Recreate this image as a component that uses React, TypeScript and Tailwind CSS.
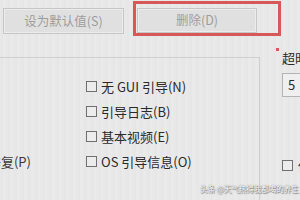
const font = { fontFamily: '"Noto Sans CJK SC", "Noto Sans", sans-serif' }

const options = ['无 GUI 引导(N)', '引导日志(B)', '基本视频(E)', 'OS 引导信息(O)']

function Box() {
  return <span className="block h-[11px] w-[11px] shrink-0 border border-[#707070] bg-[#ececec]" />
}

export default function App() {
  return (
    <div
      style={font}
      className="relative h-[200px] w-[300px] overflow-hidden bg-[#e8e8e8] bg-[repeating-linear-gradient(90deg,#e9e9e9_0px,#e5e5e5_2px,#ebebeb_4px,#e7e7e7_7px)] text-[13px] text-[#2a2a2a]"
    >
      {/* button row */}
      <div className="flex items-start text-[12.5px]">
        <button className="ml-[3px] mt-[8px] flex h-[26px] w-[121px] shrink-0 items-center justify-center border border-[#c6c6c6] bg-[#e0e0e0] text-[#9d9d9d] shadow-[inset_0_0_0_1px_#ececec]">
          设为默认值(S)
        </button>
        <div className="ml-[9px] mt-[1px] h-[35px] w-[148px] shrink-0 border-[3px] border-[#d65858] pl-[1px] pt-[4px]">
          <button className="flex h-[25px] w-[120px] items-center justify-center border border-[#c6c6c6] bg-[#e0e0e0] text-[#9d9d9d] shadow-[inset_0_0_0_1px_#ececec]">
            删除(D)
          </button>
        </div>
      </div>

      <div className="flex">
        {/* boot options group */}
        <div className="mt-[21px] h-[200px] w-[260px] shrink-0 border-r border-t border-[#cfcfcf] pt-[16px]">
          <div className="grid grid-cols-[86px_1fr] grid-rows-[25px_25px_25px_25px]">
            {options.map((label, i) => (
              <div key={label} className="contents">
                <div className="flex items-center">
                  {i === 3 && (
                    <div className="flex w-[31px] justify-end overflow-hidden whitespace-nowrap text-[#3a3a3a]">
                      修复(P)
                    </div>
                  )}
                </div>
                <div className="flex items-center gap-[4px] whitespace-nowrap">
                  <Box />
                  <span>{label}</span>
                </div>
              </div>
            ))}
          </div>
        </div>

        {/* timeout column */}
        <div className="ml-[16px] flex shrink-0 flex-col">
          <div className="flex items-start">
            <span className="mt-[12px] block h-[3px] w-[3px] bg-[#d65858]" />
            <span className="ml-[3px] mt-[15px] whitespace-nowrap leading-[13px]">超时</span>
          </div>
          <div className="ml-[6px] mt-[9px] flex h-[24px] w-[60px] items-center border border-[#b4b4b4] bg-[#efefef] pl-[5px]">
            5
          </div>
          <div className="ml-[6px] mt-[59px] flex items-center gap-[5px] whitespace-nowrap">
            <Box />
            <span>使所有</span>
          </div>
        </div>
      </div>

      {/* watermark */}
      <div className="absolute left-[200px] top-[183px] whitespace-nowrap text-[7.5px] text-white [text-shadow:0_0_1px_#666,1px_1px_1px_#777]">
        头条 @天气热得我都喝的养生
      </div>
    </div>
  )
}
